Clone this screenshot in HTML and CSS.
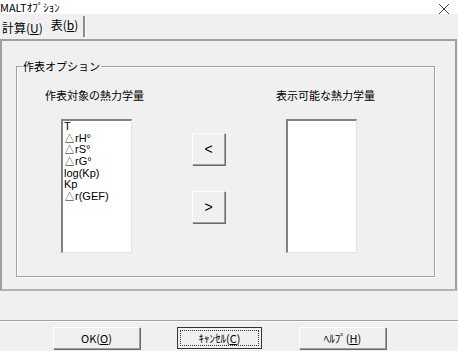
FILE: index.html
```html
<!DOCTYPE html>
<html lang="ja">
<head>
    <meta charset="UTF-8">
    <title>MALTｵﾌﾟｼｮﾝ</title>
    <link rel="stylesheet" href="styles.css">
</head>
<body>
    <div class="window">
        <!-- Title bar -->
        <div class="titlebar">
            <span class="title">MALTｵﾌﾟｼｮﾝ</span>
            <svg class="close" width="12" height="12" viewBox="0 0 12 12">
                <path d="M1 1 L11 11 M11 1 L1 11" stroke="#444" stroke-width="1"/>
            </svg>
        </div>

        <!-- Tabs -->
        <div class="tabs">
            <span class="tab">計算(<u>U</u>)</span>
            <span class="tab active">表(<u>b</u>)</span>
        </div>

        <!-- Tab page -->
        <div class="panel">
            <div class="group">
                <span class="legend">作表オプション</span>
                <div class="col col-left">
                    <div class="label">作表対象の熱力学量</div>
                    <ul class="listbox">
                        <li>T</li>
                        <li>△rH°</li>
                        <li>△rS°</li>
                        <li>△rG°</li>
                        <li>log(Kp)</li>
                        <li>Kp</li>
                        <li>△r(GEF)</li>
                    </ul>
                </div>
                <div class="col col-mid">
                    <button class="move first">&lt;</button>
                    <button class="move">&gt;</button>
                </div>
                <div class="col col-right">
                    <div class="label">表示可能な熱力学量</div>
                    <ul class="listbox"></ul>
                </div>
            </div>
        </div>

        <!-- Dialog buttons -->
        <div class="footer">
            <button class="btn">OK(<u>O</u>)</button>
            <button class="btn default"><span class="focus">ｷｬﾝｾﾙ(<u>C</u>)</span></button>
            <button class="btn">ﾍﾙﾌﾟ(<u>H</u>)</button>
        </div>
    </div>
</body>
</html>
```

FILE: styles.css
```css
/* General */
body {
    margin: 0;
    background-color: #f0f0f0;
    font-family: "Noto Sans CJK JP", "Liberation Sans", sans-serif;
    font-size: 11px;
    color: #000;
}

.window {
    width: 458px;
    height: 351px;
    overflow: hidden;
}

/* Title bar */
.titlebar {
    height: 14px;
    background: #ffffff;
    display: flex;
    justify-content: space-between;
    align-items: center;
}

.title {
    font-size: 11px;
    line-height: 12px;
}

.close {
    margin-right: 8px;
    margin-top: 4px;
}

/* Tabs */
.tabs {
    height: 25px;
    display: flex;
    align-items: center;
}

.tab {
    font-size: 12px;
    line-height: 14px;
    padding: 3px 6px 0 2px;
}

.tab.active {
    padding: 2px 5px 0 2px;
    height: 19px;
    border-right: 2px solid #8c8c8c;
    box-shadow: 1px 0 0 #ffffff;
}

/* Panel */
.panel {
    width: 457px;
    height: 252px;
    box-sizing: border-box;
    border-top: 2px solid #a0a0a0;
    border-left: 2px solid #a0a0a0;
    border-right: 2px solid #a0a0a0;
    border-bottom: 2px solid #b4b4b4;
    padding: 25px 0 0 14px;
}

/* Group box */
.group {
    position: relative;
    width: 419px;
    height: 211px;
    box-sizing: border-box;
    border: 1px solid #a0a0a0;
    box-shadow: inset 1px 1px 0 #ffffff, 1px 1px 0 #ffffff;
    display: flex;
    padding-top: 22px;
}

.legend {
    position: absolute;
    top: -7px;
    left: 5px;
    padding: 0 1px;
    background: #f0f0f0;
    line-height: 13px;
}

.label {
    line-height: 13px;
    height: 13px;
}

.col-left {
    margin-left: 28px;
    width: 147px;
}

.col-left .listbox {
    margin-left: 16px;
}

.col-mid {
    width: 33px;
    display: flex;
    flex-direction: column;
}

.col-right {
    margin-left: 51px;
}

.col-right .listbox {
    margin-left: 10px;
}

/* Listbox */
.listbox {
    list-style: none;
    margin: 17px 0 0 0;
    padding: 0 1px;
    width: 71px;
    height: 134px;
    box-sizing: border-box;
    background: #ffffff;
    border-top: 2px solid #828282;
    border-left: 2px solid #828282;
    border-right: 1px solid #e3e3e3;
    border-bottom: 1px solid #e3e3e3;
    font-family: "Liberation Sans", sans-serif;
    font-size: 11px;
    line-height: 11.7px;
}

.listbox li {
    height: 11.7px;
}

/* Move buttons */
.move {
    width: 33px;
    height: 32px;
    margin: 0;
    padding: 0;
    background: #f0f0f0;
    border: 1px solid;
    border-color: #ffffff #a0a0a0 #a0a0a0 #ffffff;
    box-shadow: 1px 1px 0 #696969;
    font-family: "Liberation Sans", sans-serif;
    font-size: 14px;
    color: #000;
}

.move.first {
    margin-top: 44px;
    margin-bottom: 26px;
}

/* Footer */
.footer {
    margin-top: 29px;
    border-top: 1px solid #a0a0a0;
    box-shadow: inset 0 1px 0 #ffffff;
    padding: 6px 0 0 53px;
    display: flex;
    gap: 37px;
}

.btn {
    width: 87px;
    height: 22px;
    margin: 0;
    padding: 0;
    background: #f0f0f0;
    border: 1px solid;
    border-color: #ffffff #a0a0a0 #a0a0a0 #ffffff;
    box-shadow: 1px 1px 0 #696969;
    font-family: "Noto Sans CJK JP", sans-serif;
    font-size: 11px;
    color: #000;
}

.btn.default {
    width: 85px;
    border: 1px solid #333;
    box-shadow: none;
    padding: 2px;
}

.focus {
    display: block;
    height: 100%;
    box-sizing: border-box;
    border: 1px dotted #333;
    line-height: 14px;
}
```
